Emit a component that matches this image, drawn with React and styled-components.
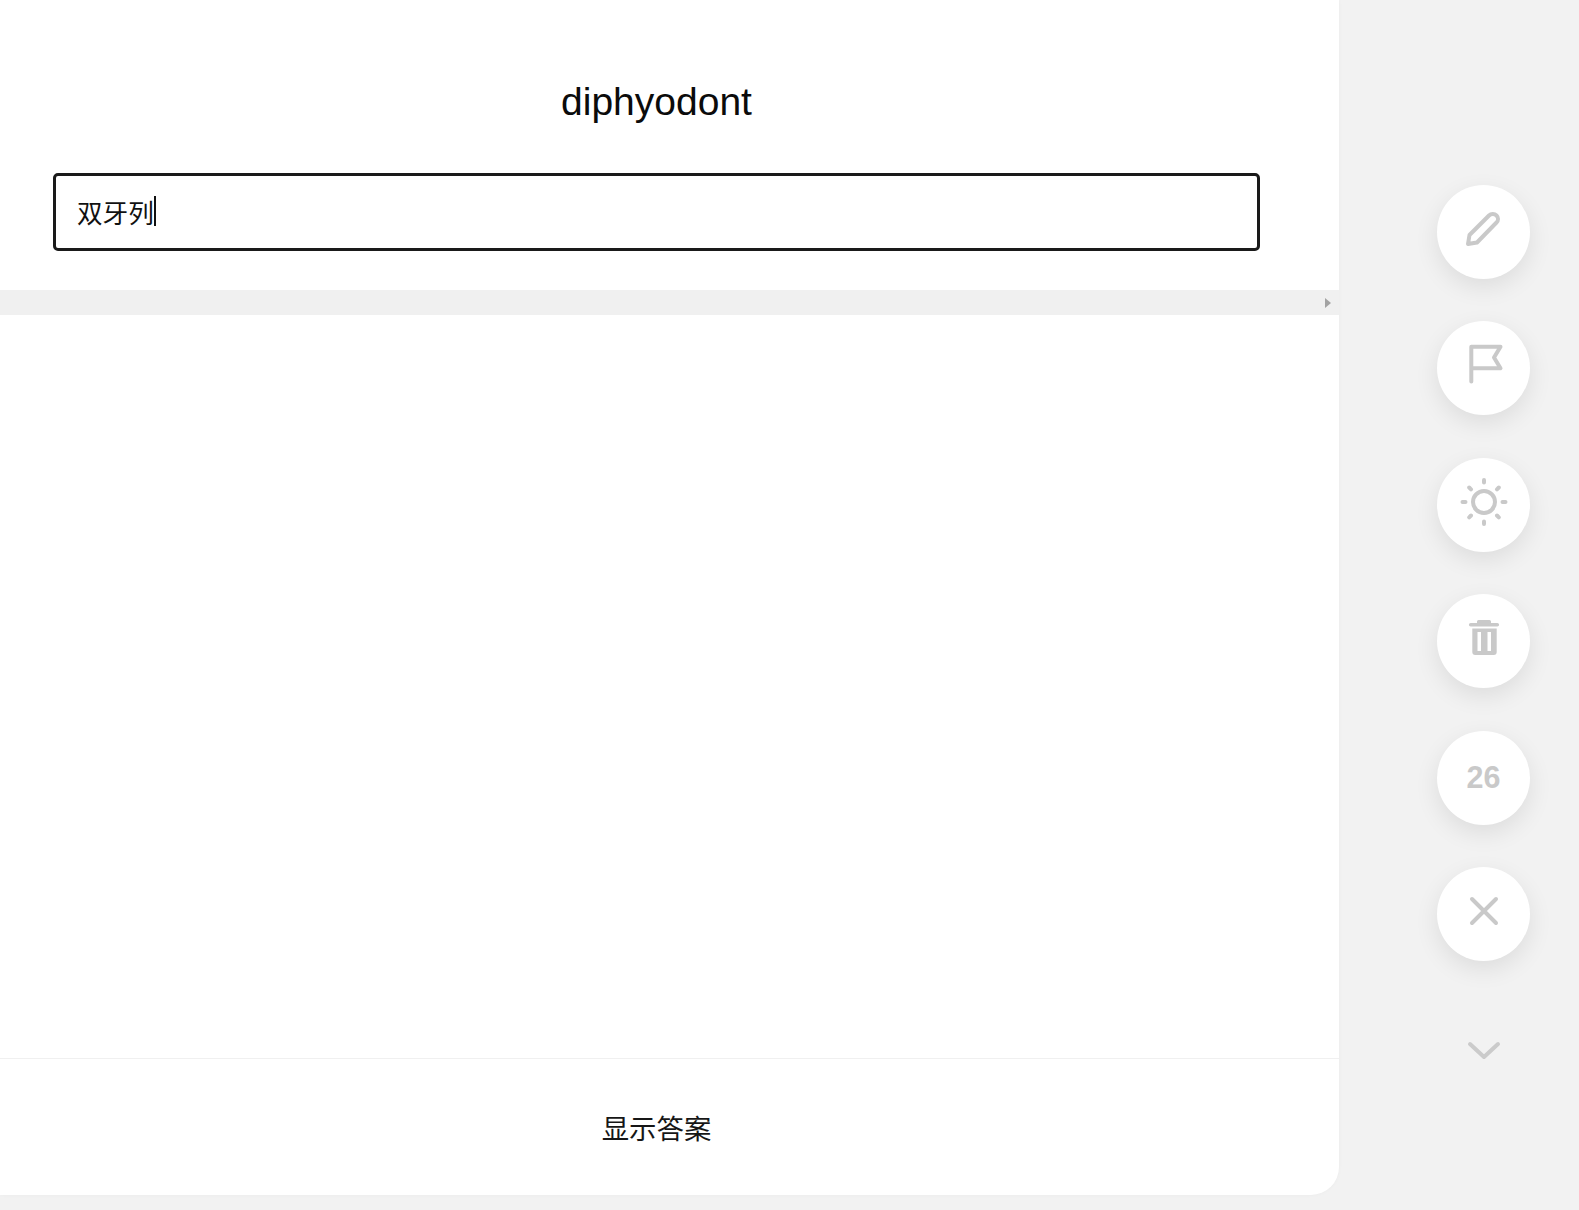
import React from "react";
import styled, { createGlobalStyle } from "styled-components";

const Global = createGlobalStyle`
  html, body { margin: 0; padding: 0; background: #f2f2f2; }
  body { font-family: "Liberation Sans", "Noto Sans CJK SC", sans-serif; }
`;

const Page = styled.div`
  display: flex;
  width: 1579px;
  height: 1210px;
  overflow: hidden;
  background: #f2f2f2;
`;

const Card = styled.main`
  width: 1339px;
  height: 1195px;
  background: #fff;
  border-bottom-right-radius: 28px;
  box-shadow: 0 0 4px rgba(0, 0, 0, 0.03);
  display: flex;
  flex-direction: column;
  flex: none;
`;

const Question = styled.section`
  height: 290px;
  flex: none;
  box-sizing: border-box;
  padding: 78px 26px 0 0;
  display: flex;
  flex-direction: column;
  align-items: center;
`;

const Word = styled.h1`
  margin: 0;
  font-size: 39px;
  line-height: 48px;
  font-weight: 400;
  color: #0b0b0b;
`;

const AnswerBox = styled.div`
  margin-top: 47px;
  width: 1207px;
  height: 78px;
  box-sizing: border-box;
  border: 3px solid #1a1a1a;
  border-radius: 5px;
  padding: 0 0 2px 21px;
  display: flex;
  align-items: center;
  font-size: 25.6px;
  color: #111;
`;

const Caret = styled.span`
  display: inline-block;
  width: 2px;
  height: 30px;
  background: #111;
`;

const Splitter = styled.div`
  height: 25px;
  flex: none;
  background: #f0f0f0;
  display: flex;
  align-items: center;
  justify-content: flex-end;
  padding-right: 8px;
`;

const Arrow = styled.span`
  width: 0;
  height: 0;
  border-left: 6px solid #a3a3a3;
  border-top: 5px solid transparent;
  border-bottom: 5px solid transparent;
`;

const Body = styled.div`
  flex: 1;
`;

const Footer = styled.footer`
  height: 136px;
  flex: none;
  box-sizing: content-box;
  padding-right: 26px;
  border-top: 1px solid #f0f0f0;
  display: flex;
  align-items: center;
  justify-content: center;
  font-size: 27.4px;
  color: #161616;
`;

const Side = styled.aside`
  flex: 1;
  box-sizing: border-box;
  padding: 185px 49px 0 98px;
  display: flex;
  flex-direction: column;
  align-items: center;
`;

const Round = styled.button`
  width: 93px;
  height: 94px;
  flex: none;
  margin-bottom: 42.4px;
  padding: 0;
  border: 0;
  border-radius: 50%;
  background: #fff;
  box-shadow: 0 8px 24px rgba(0, 0, 0, 0.09);
  color: #c9c9c9;
  display: flex;
  align-items: center;
  justify-content: center;
  font: 700 30.5px "Liberation Sans", sans-serif;
`;

const Chevron = styled.div`
  margin-top: 36px;
  height: 24px;
  display: flex;
  align-items: center;
  color: #cbcbcb;
`;

const Icon = styled.svg`
  display: block;
  flex: none;
  fill: none;
  stroke: currentColor;
  stroke-linecap: round;
  stroke-linejoin: round;
`;

const ButtonIcon = ({ sw = 4, children }) => (
  <Icon width="94" height="94" viewBox="0 0 94 94" strokeWidth={sw}>
    {children}
  </Icon>
);

export default function App() {
  return (
    <>
      <Global />
      <Page>
        <Card>
          <Question>
            <Word>diphyodont</Word>
            <AnswerBox>
              双牙列<Caret />
            </AnswerBox>
          </Question>
          <Splitter>
            <Arrow />
          </Splitter>
          <Body />
          <Footer>显示答案</Footer>
        </Card>
        <Side>
          <Round aria-label="edit">
            <ButtonIcon>
              <path d="M31 59 L32.500 50 L52 30.500 C54 28.500 57.500 28.500 59.500 30.500 C61.500 32.500 61.500 35.500 59.500 37.500 L40 57.500 Z" />
            </ButtonIcon>
          </Round>
          <Round aria-label="flag">
            <ButtonIcon>
              <path d="M34.300 60.500 V25.700 H63.500 L57 36.500 L63.500 47.300 H34.300" />
            </ButtonIcon>
          </Round>
          <Round aria-label="theme">
            <ButtonIcon>
              <circle cx="47" cy="44" r="11" />
              <path d="M47 22v2.500M47 63.500v2.500M25.500 44h3M65.500 44h3M32.200 29.500l1.800 1.800M60 57.500l1.800 1.800M61.800 29.500l-1.800 1.800M34 57.500l-1.800 1.800" />
            </ButtonIcon>
          </Round>
          <Round aria-label="delete">
            <ButtonIcon>
              <path fill="currentColor" stroke="none" d="M41.500 26h11a1.500 1.500 0 0 1 1.500 1.500V29H60.300a1.800 1.800 0 0 1 0 3.600H33.700a1.800 1.800 0 0 1 0-3.600H40V27.500A1.500 1.500 0 0 1 41.500 26Z" />
              <path fill="currentColor" stroke="none" fillRule="evenodd" d="M35.300 34.500H59.700V58a3 3 0 0 1-3 3H38.300a3 3 0 0 1-3-3ZM40.500 38V57H44V38ZM50.500 38V57H54V38Z" />
            </ButtonIcon>
          </Round>
          <Round aria-label="count">26</Round>
          <Round aria-label="close">
            <ButtonIcon>
              <path d="M35 32L59 56M59 32L35 56" />
            </ButtonIcon>
          </Round>
          <Chevron>
            <Icon width="34" height="20" viewBox="0 0 34 20" strokeWidth="4">
              <path d="M3 3L17 16L31 3" />
            </Icon>
          </Chevron>
        </Side>
      </Page>
    </>
  );
}
